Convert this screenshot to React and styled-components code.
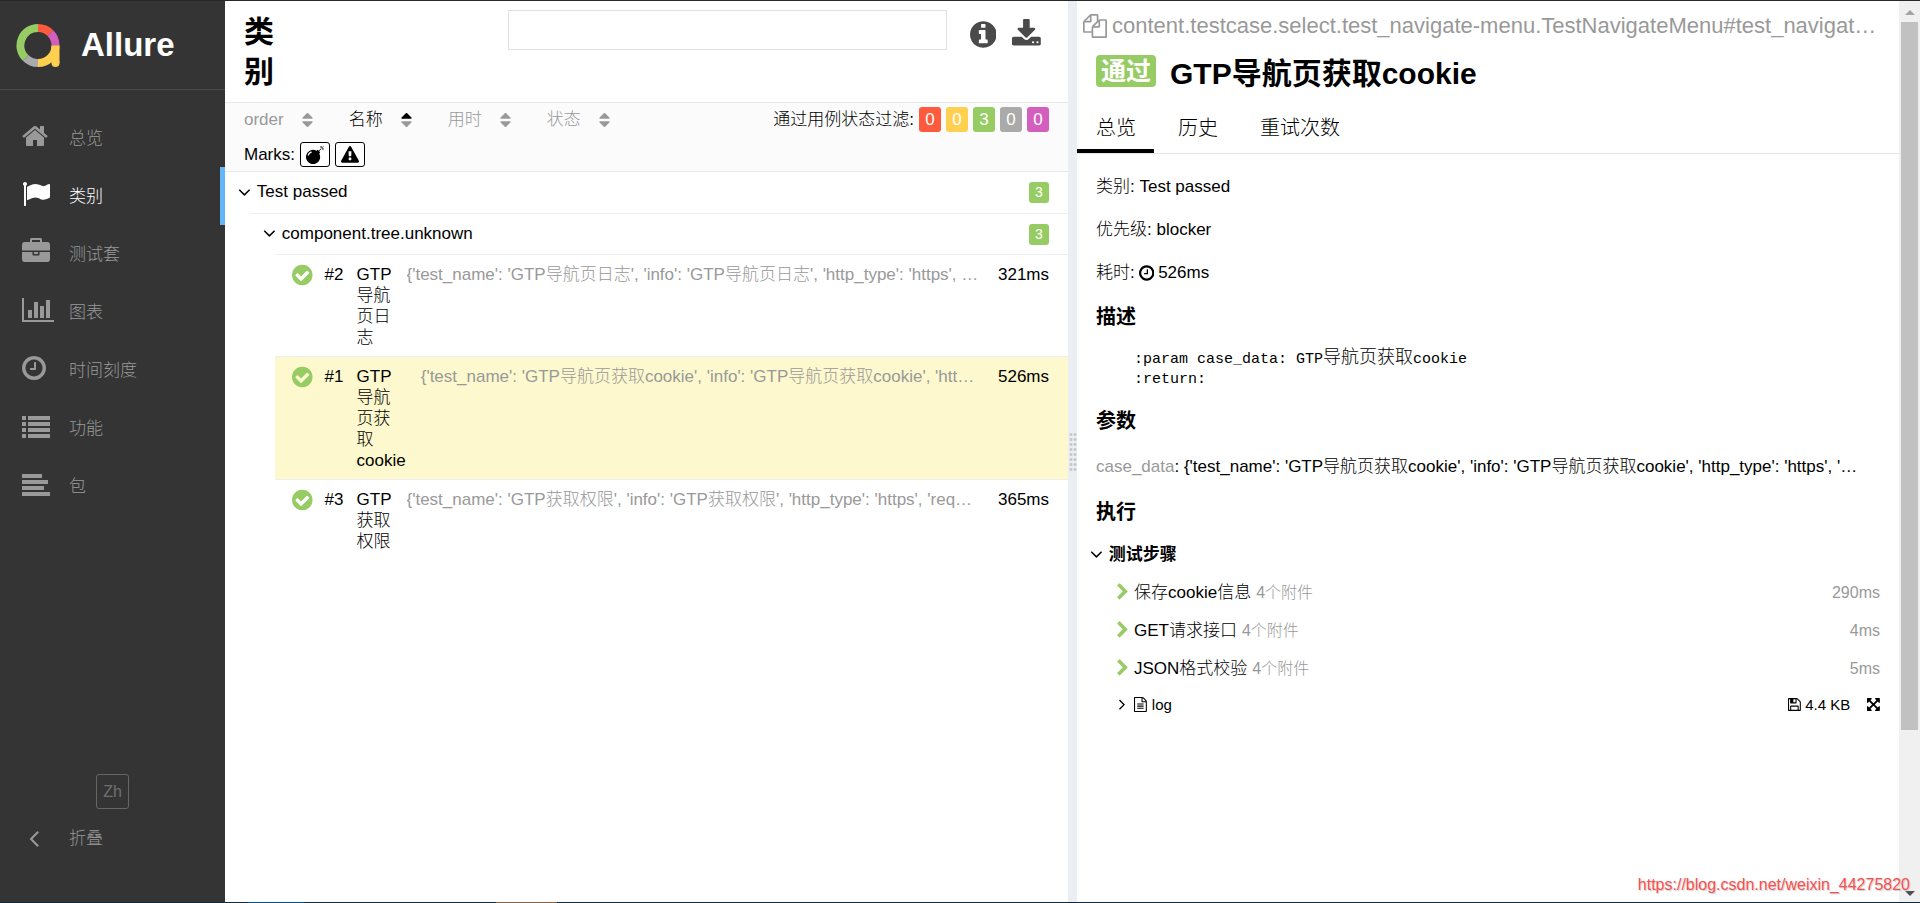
import React from 'react'
import styled, { createGlobalStyle, css } from 'styled-components'

const GlobalStyle = createGlobalStyle`
  * {
    box-sizing: border-box;
  }
  body {
    margin: 0;
    font-family: "Liberation Sans", "Noto Sans CJK SC", sans-serif;
    font-size: 17px;
    font-weight: 300;
    line-height: 21px;
    color: #000;
    background: #fff;
  }
  button, input {
    font: inherit;
    color: inherit;
  }
  button {
    padding: 0;
    border: 0;
    background: none;
    cursor: pointer;
  }
  a {
    color: inherit;
    text-decoration: none;
  }
  h1, h2, h3, p, pre, ul {
    margin: 0;
    padding: 0;
  }
`

const colors = {
  failed: '#fd5a3e',
  broken: '#ffd050',
  passed: '#97cc64',
  skipped: '#aaa',
  unknown: '#d35ebe',
}

/* icons: [left edge, advance width, path] on a 1792 em */
const disc =
  'm640 416q0 209-103 385.5t-279.5 279.5-385.5 103-385.5-103-279.5-279.5-103-385.5 103-385.5 279.5-279.5 385.5-103 385.5 103 279.5 279.5 103 385.5z'
const glyphs = {
  home: [64, 1664, 'M1472 992v480q0 26-19 45t-45 19h-384v-384h-256v384h-384q-26 0-45-19t-19-45v-480q0-1 .5-3t.5-3l575-474 575 474q1 2 1 6zm223-69l-62 74q-8 9-21 11h-3q-13 0-21-7l-692-577-692 577q-12 8-24 7-13-2-21-11l-62-74q-8-10-7-23.5t11-21.5l719-599q32-26 76-26t76 26l244 204v-195q0-14 9-23t23-9h192q14 0 23 9t9 23v408l219 182q10 8 11 21.5t-7 23.5z'],
  flag: [0, 1792, 'M320 256q0 72-64 110v1266q0 13-9.5 22.5t-22.5 9.5h-64q-13 0-22.5-9.5t-9.5-22.5v-1266q-64-38-64-110 0-53 37.5-90.5t90.5-37.5 90.5 37.5 37.5 90.5zm1472 64v763q0 25-12.5 38.5t-39.5 27.5q-215 116-369 116-61 0-123.5-22t-108.5-48-115.5-48-142.5-22q-192 0-464 146-17 9-33 9-26 0-45-19t-19-45v-742q0-32 31-55 21-14 79-43 236-120 421-120 107 0 200 29t219 88q38 19 88 19 54 0 117.5-21t110-47 88-47 54.5-21q26 0 45 19t19 45z'],
  briefcase: [0, 1792, 'M640 256h512v-128h-512v128zm1152 640v480q0 66-47 113t-113 47h-1472q-66 0-113-47t-47-113v-480h672v160q0 26 19 45t45 19h320q26 0 45-19t19-45v-160h672zm-768 0v128h-256v-128h256zm768-480v384h-1792v-384q0-66 47-113t113-47h352v-160q0-40 28-68t68-28h576q40 0 68 28t28 68v160h352q66 0 113 47t47 113z'],
  chart: [0, 2048, 'M640 896v512h-256v-512h256zm384-512v1024h-256v-1024h256zm1024 1152v128h-2048v-1536h128v1408h1920zm-640-896v768h-256v-768h256zm384-384v1152h-256v-1152h256z'],
  clock: [128, 1536, 'M1024 544v448q0 14-9 23t-23 9h-320q-14 0-23-9t-9-23v-64q0-14 9-23t23-9h224v-352q0-14 9-23t23-9h64q14 0 23 9t9 23zm416 352q0-148-73-273t-198-198-273-73-273 73-198 198-73 273 73 273 198 198 273 73 273-73 198-198 73-273zm224 0q0 209-103 385.5t-279.5 279.5-385.5 103-385.5-103-279.5-279.5-103-385.5 103-385.5 279.5-279.5 385.5-103 385.5 103 279.5 279.5 103 385.5z'],
  list: [0, 1792, 'M0 256h256v256H0zM384 256h1408v256H384zM0 640h256v256H0zM384 640h1408v256H384zM0 1024h256v256H0zM384 1024h1408v256H384zM0 1408h256v256H0zM384 1408h1408v256H384z'],
  align: [0, 1792, 'M0 256h1280v256H0zM0 640h1664v256H0zM0 1024h1408v256H0zM0 1408h1792v256H0z'],
  down: [320, 1152, 'M1395 736q0 13-10 23l-466 466q-10 10-23 10t-23-10l-466-466q-10-10-10-23t10-23l50-50q10-10 23-10t23 10l393 393 393-393q10-10 23-10t23 10l50 50q10 10 10 23z'],
  right: [576, 640, 'M1171 960q0 13-10 23l-466 466q-10 10-23 10t-23-10l-50-50q-10-10-10-23t10-23l393-393-393-393q-10-10-10-23t10-23l50-50q10-10 23-10t23 10l466 466q10 10 10 23z'],
  left: [576, 640, 'M1203 544q0 13-10 23l-393 393 393 393q10 10 10 23t-10 23l-50 50q-10 10-23 10t-23-10l-466-466q-10-10-10-23t10-23l466-466q10-10 23-10t23 10l50 50q10 10 10 23z'],
  chevron: [320, 1152, 'M1363 877l-742 742q-19 19-45 19t-45-19l-166-166q-19-19-19-45t19-45l531-531-531-531q-19-19-19-45t19-45l166-166q19-19 45-19t45 19l742 742q19 19 19 45t-19 45z'],
  check: [128, 1536, 'M1412 734q0-28-18-46l-91-90q-19-19-45-19t-45 19l-408 407-226-226q-19-19-45-19t-45 19l-91 90q-18 18-18 46 0 27 18 45l362 362q19 19 45 19 27 0 46-19l543-543q18-18 18-45zm252 162q0 209-103 385.5t-279.5 279.5-385.5 103-385.5-103-279.5-279.5-103-385.5 103-385.5 279.5-279.5 385.5-103 385.5 103 279.5 279.5 103 385.5z'],
  info: [128, 1536, 'M1152 1376v-160q0-14-9-23t-23-9h-96v-512q0-14-9-23t-23-9h-320q-14 0-23 9t-9 23v160q0 14 9 23t23 9h96v320h-96q-14 0-23 9t-9 23v160q0 14 9 23t23 9h448q14 0 23-9t9-23zm-128-896v-160q0-14-9-23t-23-9h-192q-14 0-23 9t-9 23v160q0 14 9 23t23 9h192q14 0 23-9t9-23z' + disc],
  download: [64, 1664, 'M1344 1344q0-26-19-45t-45-19-45 19-19 45 19 45 45 19 45-19 19-45zm256 0q0-26-19-45t-45-19-45 19-19 45 19 45 45 19 45-19 19-45zm128-224v320q0 40-28 68t-68 28h-1472q-40 0-68-28t-28-68v-320q0-40 28-68t68-28h465l135 136q58 56 136 56t136-56l136-136h464q40 0 68 28t28 68zm-325-569q17 41-14 70l-448 448q-18 19-45 19t-45-19l-448-448q-31-29-14-70 17-39 59-39h256v-448q0-26 19-45t45-19h256q26 0 45 19t19 45v448h256q42 0 59 39z'],
  copy: [0, 1792, 'M1696 384q40 0 68 28t28 68v1216q0 40-28 68t-68 28h-960q-40 0-68-28t-28-68v-288h-544q-40 0-68-28t-28-68v-672q0-40 20-88t48-76l408-408q28-28 76-48t88-20h416q40 0 68 28t28 68v328q68-40 128-40h416zm-544 213l-299 299h299v-299zm-640-384l-299 299h299v-299zm196 647l316-316v-416h-384v416q0 40-28 68t-68 28h-416v640h512v-256q0-40 20-88t48-76zm956 804v-1152h-384v416q0 40-28 68t-68 28h-416v640h896z'],
  file: [128, 1536, 'M1596 380q28 28 48 76t20 88v1152q0 40-28 68t-68 28h-1344q-40 0-68-28t-28-68v-1600q0-40 28-68t68-28h896q40 0 88 20t76 48zm-444-244v376h376q-10-29-22-41l-313-313q-12-12-41-22zm384 1528v-1024h-416q-40 0-68-28t-28-68v-416h-768v1536h1280zm-1024-864q0-14 9-23t23-9h704q14 0 23 9t9 23v64q0 14-9 23t-23 9h-704q-14 0-23-9t-9-23v-64zm736 224q14 0 23 9t9 23v64q0 14-9 23t-23 9h-704q-14 0-23-9t-9-23v-64q0-14 9-23t23-9h704zm0 256q14 0 23 9t9 23v64q0 14-9 23t-23 9h-704q-14 0-23-9t-9-23v-64q0-14 9-23t23-9h704z'],
  save: [128, 1536, 'M512 1536h768v-384h-768v384zm896 0h128v-896q0-14-10-38.5t-20-34.5l-281-281q-10-10-34-20t-39-10v416q0 40-28 68t-68 28h-576q-40 0-68-28t-28-68v-416h-128v1280h128v-416q0-40 28-68t68-28h832q40 0 68 28t28 68v416zm-384-928v-320q0-13-9.5-22.5t-22.5-9.5h-192q-13 0-22.5 9.5t-9.5 22.5v320q0 13 9.5 22.5t22.5 9.5h192q13 0 22.5-9.5t9.5-22.5zm640 32v928q0 40-28 68t-68 28h-1344q-40 0-68-28t-28-68v-1344q0-40 28-68t68-28h928q40 0 88 20t76 48l280 280q28 28 48 76t20 88z'],
  expand: [128, 1536, 'M1411 541l-355 355 355 355 144-144q29-31 70-14 39 17 39 59v448q0 26-19 45t-45 19h-448q-42 0-59-40-17-39 14-69l144-144-355-355-355 355 144 144q31 30 14 69-17 40-59 40h-448q-26 0-45-19t-19-45v-448q0-42 40-59 39-17 69 14l144 144 355-355-355-355-144 144q-19 19-45 19-12 0-24-5-40-17-40-59v-448q0-26 19-45t45-19h448q42 0 59 40 17 39-14 69l-144 144 355 355 355-355-144-144q-31-30-14-69 17-40 59-40h448q26 0 45 19t19 45v448q0 42-39 59-13 5-25 5-26 0-45-19z'],
  bomb: [0, 1792, 'M571 589q-10-25-34-35t-49 0q-108 44-191 127t-127 191q-10 25 0 49t35 34q13 5 24 5 42 0 60-40 34-84 98.5-148.5t148.5-98.5q25-11 35-35t0-49zm942-356l46 46-244 243 68 68q19 19 19 45.5t-19 45.5l-64 64q89 161 89 343 0 143-55.5 273.5t-150 225-225 150-273.5 55.5-273.5-55.5-225-150-150-225-55.5-273.5 55.5-273.5 150-225 225-150 273.5-55.5q182 0 343 89l64-64q19-19 45.5-19t45.5 19l68 68zm8-56q-10 10-22 10-13 0-23-10l-91-90q-9-10-9-23t9-23q10-9 23-9t23 9l90 91q10 9 10 22.5t-10 22.5zm230 230q-11 9-23 9t-23-9l-90-91q-10-9-10-22.5t10-22.5q9-10 22.5-10t22.5 10l91 90q9 10 9 23t-9 23zm41-183q0 14-9 23t-23 9h-96q-14 0-23-9t-9-23 9-23 23-9h96q14 0 23 9t9 23zm-192-192v96q0 14-9 23t-23 9-23-9-9-23v-96q0-14 9-23t23-9 23 9 9 23zm151 55l-91 90q-10 10-22 10-13 0-23-10-10-9-10-22.5t10-22.5l90-91q10-9 23-9t23 9q9 10 9 23t-9 23z'],
  warning: [0, 1792, 'M1024 1375v-190q0-14-9.5-23.5t-22.5-9.5h-192q-13 0-22.5 9.5t-9.5 23.5v190q0 14 9.5 23.5t22.5 9.5h192q13 0 22.5-9.5t9.5-23.5zm-2-374l18-459q0-12-10-19-13-11-24-11h-220q-11 0-24 11-10 7-10 21l17 457q0 10 10 16.5t24 6.5h185q14 0 23.5-6.5t10.5-16.5zm-14-934l768 1408q35 63-2 126-17 29-46.5 46t-63.5 17h-1536q-34 0-63.5-17t-46.5-46q-37-63-2-126l768-1408q17-31 47-49t65-18 65 18 47 49z'],
}

const Svg = styled.svg`
  display: block;
  flex: none;
  height: ${(p) => p.$size}px;
  fill: ${(p) => p.$color || 'currentColor'};
`

function Icon({ name, size = 18, color }) {
  const [x, width, d] = glyphs[name]
  return (
    <Svg $size={size} $color={color} viewBox={`${x} 0 ${width} 1792`} aria-hidden="true">
      <path d={d} />
    </Svg>
  )
}

const Page = styled.div`
  position: relative;
  display: flex;
  flex-direction: column;
  height: 100vh;
  overflow: hidden;
  border-top: 1px solid #2b2629;
`
const Columns = styled.div`
  flex: 1;
  min-height: 0;
  display: flex;
`
const Taskbar = styled.div`
  height: 1px;
  background: linear-gradient(
    90deg,
    #0c2a42 248px, #00508f 248px, #00508f 304px, #0c2a42 304px,
    #0c2a42 496px, #86603f 496px, #86603f 557px, #0c2a42 557px
  );
`

/* side navigation */
const Side = styled.nav`
  flex: none;
  width: 225px;
  display: flex;
  flex-direction: column;
  background: #343434;
  color: #999;
`
const Brand = styled.a`
  display: flex;
  align-items: center;
  gap: 20px;
  height: 89px;
  padding: 0 16px;
  border-bottom: 1px solid #4d4d4d;
  color: #fff;
  font-size: 33px;
  font-weight: 700;
  line-height: 40px;
`
const Logo = styled.svg`
  flex: none;
  width: 45px;
  height: 45px;
`
const Menu = styled.ul`
  flex: 1;
  padding-top: 19px;
  list-style: none;
`
const MenuLink = styled.a`
  display: flex;
  align-items: center;
  height: 58px;
  padding-left: 22px;
  border-right: 5px solid ${(p) => (p.$active ? '#64b5f6' : 'transparent')};
  color: ${(p) => (p.$active ? '#fff' : '#999')};
`
const MenuIcon = styled.span`
  width: 47px;
  padding-bottom: 4px;
`
const SideFooter = styled.div`
  display: flex;
  flex-direction: column;
  padding-bottom: 39px;
`
const LangButton = styled.button`
  align-self: center;
  width: 33px;
  height: 35px;
  border: 1px solid #666;
  border-radius: 3px;
  color: #707070;
  font-size: 16px;
`
const Collapse = styled.button`
  display: flex;
  align-items: center;
  height: 50px;
  margin-top: 4px;
  padding-left: 29px;
  text-align: left;
`
const CollapseIcon = styled.span`
  width: 40px;
`

/* test tree pane */
const TreePane = styled.main`
  flex: 1 1 0;
  min-width: 0;
`
const TreeHeader = styled.div`
  display: flex;
  align-items: flex-start;
  height: 102px;
  padding: 9px 27px 0 19px;
  border-bottom: 1px solid #e8e8e8;
  color: #4a4a4a;
`
const TreeTitle = styled.h1`
  flex: 1;
  padding-top: 2px;
  color: #000;
  font-size: 30px;
  font-weight: 700;
  line-height: 40px;
`
const TitleText = styled.span`
  display: block;
  width: min-content;
`
const Search = styled.input`
  flex: none;
  width: 55%;
  height: 40px;
  margin-right: 23px;
  padding: 0 10px;
  border: 1px solid #e2e2e2;
  background: #fff;
  outline: none;
`
const ToolButton = styled.button`
  margin: 9px 16px 0 0;
  &:last-child {
    margin-right: 0;
  }
`
const Controls = styled.div`
  display: flex;
  flex-direction: column;
  gap: 10px;
  padding: 4px 19px;
  background: #fbfbfb;
  border-bottom: 1px solid #e8e8e8;
`
const ControlRow = styled.div`
  display: flex;
  align-items: center;
  height: 25px;
  gap: 5px;
`
const Sorters = styled.div`
  flex: 1;
  display: flex;
  gap: 36px;
`
const Sorter = styled.button`
  display: flex;
  align-items: center;
  gap: 18px;
  color: ${(p) => (p.$active ? '#000' : '#999')};
`
const SortMark = styled.svg`
  width: 11px;
  height: 18px;
  fill: #999;
`
const SortUp = styled.path`
  fill: ${(p) => (p.$active ? '#000' : '#999')};
`
const Count = styled.button`
  width: 22px;
  height: 25px;
  border-radius: 3px;
  background: ${(p) => p.$color};
  color: #fff;
`
const MarkButton = styled.button`
  display: flex;
  align-items: center;
  justify-content: center;
  width: 30px;
  height: 25px;
  border: 1px solid #000;
  border-radius: 3px;
  background: #fff;
`
const Group = styled.div`
  display: flex;
  align-items: center;
  height: 41px;
  margin-left: ${(p) => p.$indent}px;
  padding: 0 19px 2px 13px;
  gap: 6px;
  ${(p) =>
    p.$indent > 0 &&
    css`
      border-top: 1px solid #eceff1;
    `}
`
const GroupName = styled.span`
  flex: 1;
`
const GroupCount = styled.span`
  width: 20px;
  height: 21px;
  margin-top: 2px;
  border-radius: 3px;
  background: #97cc64;
  color: #fff;
  font-size: 14px;
  text-align: center;
`
const Case = styled.a`
  display: flex;
  align-items: flex-start;
  margin-left: 50px;
  padding: 9px 19px 8px 17px;
  border-top: 1px solid #eceff1;
  background: ${(p) => (p.$selected ? '#fdf8cd' : '#fff')};
`
const CaseStatus = styled.span`
  flex: none;
  display: flex;
  align-items: center;
  height: 21px;
`
const CaseOrder = styled.span`
  flex: none;
  width: 32px;
  margin-left: 12px;
`
const CaseName = styled.span`
  flex: none;
  width: min-content;
`
const CaseParams = styled.span`
  flex: 1;
  min-width: 0;
  margin-left: 15px;
  overflow: hidden;
  white-space: nowrap;
  text-overflow: ellipsis;
  color: #999;
`

/* splitter between the panes */
const Gutter = styled.div`
  flex: none;
  width: 9px;
  display: flex;
  align-items: center;
  justify-content: center;
  background: #ebeef2;
`
const Grip = styled.div`
  width: 8px;
  height: 40px;
  background: radial-gradient(circle at center, #c8c8c8 1px, transparent 2px) 0 0 / 4px 5px;
`

/* details pane */
const Details = styled.section`
  flex: 1 1 0;
  min-width: 0;
  display: flex;
`
const DetailsBody = styled.div`
  flex: 1;
  min-width: 0;
`
const Path = styled.div`
  display: flex;
  align-items: center;
  gap: 5px;
  height: 50px;
  padding: 0 4px 0 6px;
  color: #999;
  font-size: 22px;
  line-height: 28px;
`
const Clip = styled.span`
  min-width: 0;
  overflow: hidden;
  white-space: nowrap;
  text-overflow: ellipsis;
`
const CaseTitle = styled.h2`
  display: flex;
  align-items: center;
  gap: 14px;
  height: 46px;
  padding-left: 19px;
  font-size: 30px;
  line-height: 40px;
`
const StatusLabel = styled.span`
  height: 32px;
  margin-bottom: 6px;
  padding: 0 5px;
  border-radius: 4px;
  background: #97cc64;
  color: #fff;
  font-size: 25px;
  line-height: 32px;
`
const Tabs = styled.div`
  display: flex;
  gap: 5px;
  height: 57px;
  border-bottom: 1px solid #e5e5e5;
`
const Tab = styled.button`
  padding: 10px 18px 0 19px;
  border-bottom: 4px solid ${(p) => (p.$active ? '#000' : 'transparent')};
  font-size: 20px;
`
const Overview = styled.div`
  padding: 11px 19px 0;
`
const Field = styled.p`
  display: flex;
  align-items: center;
  gap: 4px;
  height: 43px;
`
const Heading = styled.h3`
  height: 46px;
  font-size: 20px;
  line-height: 46px;
`
const Description = styled.pre`
  height: 50px;
  margin-top: 8px;
  padding-left: 38px;
  font-family: "Liberation Mono", "Noto Sans CJK SC", monospace;
  font-size: 15px;
  line-height: 20px;
`
const Han = styled.span`
  font-size: 18px;
`
const Param = styled.p`
  margin: 12px 0;
  overflow: hidden;
  white-space: nowrap;
  text-overflow: ellipsis;
`
const Gray = styled.span`
  color: #999;
  font-size: ${(p) => (p.$small ? 16 : 17)}px;
`
const StepsTitle = styled.button`
  display: flex;
  align-items: center;
  gap: 6px;
  height: 38px;
  margin-left: -6px;
  font-weight: 700;
`
const Step = styled.div`
  display: flex;
  align-items: center;
  gap: 5px;
  height: ${(p) => (p.$small ? 34 : 38)}px;
  padding-left: 20px;
  font-size: ${(p) => (p.$small ? 15 : 17)}px;
`
const StepMark = styled.span`
  display: flex;
  justify-content: center;
  width: 13px;
`
const Spring = styled.span`
  flex: 1;
`
const Attachment = styled.a`
  display: flex;
  align-items: center;
  gap: 4px;
  margin-right: 12px;
`
const Scrollbar = styled.div`
  flex: none;
  width: 21px;
  display: flex;
  flex-direction: column;
  align-items: center;
  background: #f0f0f0;
`
const Thumb = styled.div`
  flex: 1;
  width: 17px;
  background: #c1c1c1;
`
const Track = styled.div`
  height: 17%;
`
const Arrow = styled.div`
  width: 0;
  height: 0;
  border: 5px solid transparent;
  ${(p) =>
    p.$up
      ? css`
          margin: 9px 0 7px;
          border-top: 0;
          border-bottom-color: #a3a3a3;
        `
      : css`
          margin: 8px 0 6px;
          border-bottom: 0;
          border-top-color: #505050;
        `}
`
const Watermark = styled.span`
  position: absolute;
  right: 10px;
  bottom: 8px;
  color: #f74f4f;
  font-size: 16px;
  text-shadow: 1px 1px 1px #ccc;
`

const menu = [
  ['home', '总览'],
  ['flag', '类别'],
  ['briefcase', '测试套'],
  ['chart', '图表'],
  ['clock', '时间刻度'],
  ['list', '功能'],
  ['align', '包'],
]

const sorters = ['order', '名称', '用时', '状态']

const statuses = [
  ['failed', 0],
  ['broken', 0],
  ['passed', 3],
  ['skipped', 0],
  ['unknown', 0],
]

const cases = [
  {
    order: 2,
    name: 'GTP导航页日志',
    params: "{'test_name': 'GTP导航页日志', 'info': 'GTP导航页日志', 'http_type': 'https', …",
    time: '321ms',
  },
  {
    order: 1,
    name: 'GTP导航页获取cookie',
    params: "{'test_name': 'GTP导航页获取cookie', 'info': 'GTP导航页获取cookie', 'htt…",
    time: '526ms',
  },
  {
    order: 3,
    name: 'GTP获取权限',
    params: "{'test_name': 'GTP获取权限', 'info': 'GTP获取权限', 'http_type': 'https', 'req…",
    time: '365ms',
  },
]

const steps = [
  ['保存cookie信息', '290ms'],
  ['GET请求接口', '4ms'],
  ['JSON格式校验', '5ms'],
]

function AllureLogo() {
  return (
    <Logo viewBox="0 0 45 45" fill="none" strokeWidth="8" aria-hidden="true">
      <path d="M22 5A17.500 17.500 0 0 0 9.600 34.900" stroke="#97cc64" />
      <path d="M9.600 34.900A17.500 17.500 0 0 0 22 40" stroke="#aaa" />
      <path d="M22 40A17.500 17.500 0 0 0 39.500 22.500" stroke="#ffd050" />
      <path d="M22 5A17.500 17.500 0 0 1 34.400 10.100" stroke="#fd5a3e" />
      <path d="M34.400 10.100A17.500 17.500 0 0 1 39.500 22.500" stroke="#d35ebe" />
      <path d="M39.500 22.500V40" stroke="#ffd050" />
      <circle cx="39.500" cy="40" r="4" fill="#ffd050" />
    </Logo>
  )
}

function Sidebar() {
  return (
    <Side>
      <Brand href="#">
        <AllureLogo />
        Allure
      </Brand>
      <Menu>
        {menu.map(([icon, label], i) => (
          <li key={label}>
            <MenuLink href={'#' + icon} $active={i === 1}>
              <MenuIcon>
                <Icon name={icon} size={28} />
              </MenuIcon>
              {label}
            </MenuLink>
          </li>
        ))}
      </Menu>
      <SideFooter>
        <LangButton>Zh</LangButton>
        <Collapse>
          <CollapseIcon>
            <Icon name="left" size={28} />
          </CollapseIcon>
          折叠
        </Collapse>
      </SideFooter>
    </Side>
  )
}

function Tree() {
  return (
    <TreePane>
      <TreeHeader>
        <TreeTitle>
          <TitleText>类别</TitleText>
        </TreeTitle>
        <Search type="text" aria-label="search" />
        <ToolButton aria-label="info">
          <Icon name="info" size={31} />
        </ToolButton>
        <ToolButton aria-label="download">
          <Icon name="download" size={31} />
        </ToolButton>
      </TreeHeader>
      <Controls>
        <ControlRow>
          <Sorters>
            {sorters.map((label, i) => (
              <Sorter key={label} $active={i === 1}>
                {label}
                <SortMark viewBox="384 0 1024 1792">
                  <SortUp
                    $active={i === 1}
                    d="M1408 704q0 26-19 45t-45 19h-896q-26 0-45-19t-19-45 19-45l448-448q19-19 45-19t45 19l448 448q19 19 19 45z"
                  />
                  <path d="M1408 1088q0 26-19 45l-448 448q-19 19-45 19t-45-19l-448-448q-19-19-19-45t19-45 45-19h896q26 0 45 19t19 45z" />
                </SortMark>
              </Sorter>
            ))}
          </Sorters>
          <span>通过用例状态过滤:</span>
          {statuses.map(([status, n]) => (
            <Count key={status} $color={colors[status]} aria-label={status}>
              {n}
            </Count>
          ))}
        </ControlRow>
        <ControlRow>
          <span>Marks:</span>
          <MarkButton aria-label="flaky">
            <Icon name="bomb" />
          </MarkButton>
          <MarkButton aria-label="new failed">
            <Icon name="warning" />
          </MarkButton>
        </ControlRow>
      </Controls>
      <Group $indent={0}>
        <Icon name="down" size={20} />
        <GroupName>Test passed</GroupName>
        <GroupCount>3</GroupCount>
      </Group>
      <Group $indent={25}>
        <Icon name="down" size={20} />
        <GroupName>component.tree.unknown</GroupName>
        <GroupCount>3</GroupCount>
      </Group>
      {cases.map((c) => (
        <Case key={c.order} href={'#case' + c.order} $selected={c.order === 1}>
          <CaseStatus>
            <Icon name="check" size={24} color={colors.passed} />
          </CaseStatus>
          <CaseOrder>#{c.order}</CaseOrder>
          <CaseName>{c.name}</CaseName>
          <CaseParams>{c.params}</CaseParams>
          <span>{c.time}</span>
        </Case>
      ))}
    </TreePane>
  )
}

function TestDetails() {
  return (
    <Details>
      <DetailsBody>
        <Path>
          <Icon name="copy" size={24} />
          <Clip>content.testcase.select.test_navigate-menu.TestNavigateMenu#test_navigat…</Clip>
        </Path>
        <CaseTitle>
          <StatusLabel>通过</StatusLabel>
          GTP导航页获取cookie
        </CaseTitle>
        <Tabs>
          <Tab $active>总览</Tab>
          <Tab>历史</Tab>
          <Tab>重试次数</Tab>
        </Tabs>
        <Overview>
          <Field>类别: Test passed</Field>
          <Field>优先级: blocker</Field>
          <Field>
            耗时: <Icon name="clock" />
            526ms
          </Field>
          <Heading>描述</Heading>
          <Description>
            :param case_data: GTP<Han>导航页获取</Han>cookie{'\n'}:return:
          </Description>
          <Heading>参数</Heading>
          <Param>
            <Gray>case_data</Gray>
            {": {'test_name': 'GTP导航页获取cookie', 'info': 'GTP导航页获取cookie', 'http_type': 'https', '…"}
          </Param>
          <Heading>执行</Heading>
          <StepsTitle>
            <Icon name="down" size={20} />
            测试步骤
          </StepsTitle>
          {steps.map(([name, time]) => (
            <Step key={name}>
              <StepMark>
                <Icon name="chevron" color={colors.passed} />
              </StepMark>
              <span>{name}</span>
              <Gray $small>4个附件</Gray>
              <Spring />
              <Gray $small>{time}</Gray>
            </Step>
          ))}
          <Step $small>
            <StepMark>
              <Icon name="right" />
            </StepMark>
            <Icon name="file" size={15} />
            <span>log</span>
            <Spring />
            <Attachment href="#log">
              <Icon name="save" size={15} />
              4.4 KB
            </Attachment>
            <Icon name="expand" size={15} />
          </Step>
        </Overview>
      </DetailsBody>
      <Scrollbar>
        <Arrow $up />
        <Thumb />
        <Track />
        <Arrow />
      </Scrollbar>
    </Details>
  )
}

export default function App() {
  return (
    <Page>
      <GlobalStyle />
      <Columns>
        <Sidebar />
        <Tree />
        <Gutter>
          <Grip />
        </Gutter>
        <TestDetails />
      </Columns>
      <Taskbar />
      <Watermark>https://blog.csdn.net/weixin_44275820</Watermark>
    </Page>
  )
}
